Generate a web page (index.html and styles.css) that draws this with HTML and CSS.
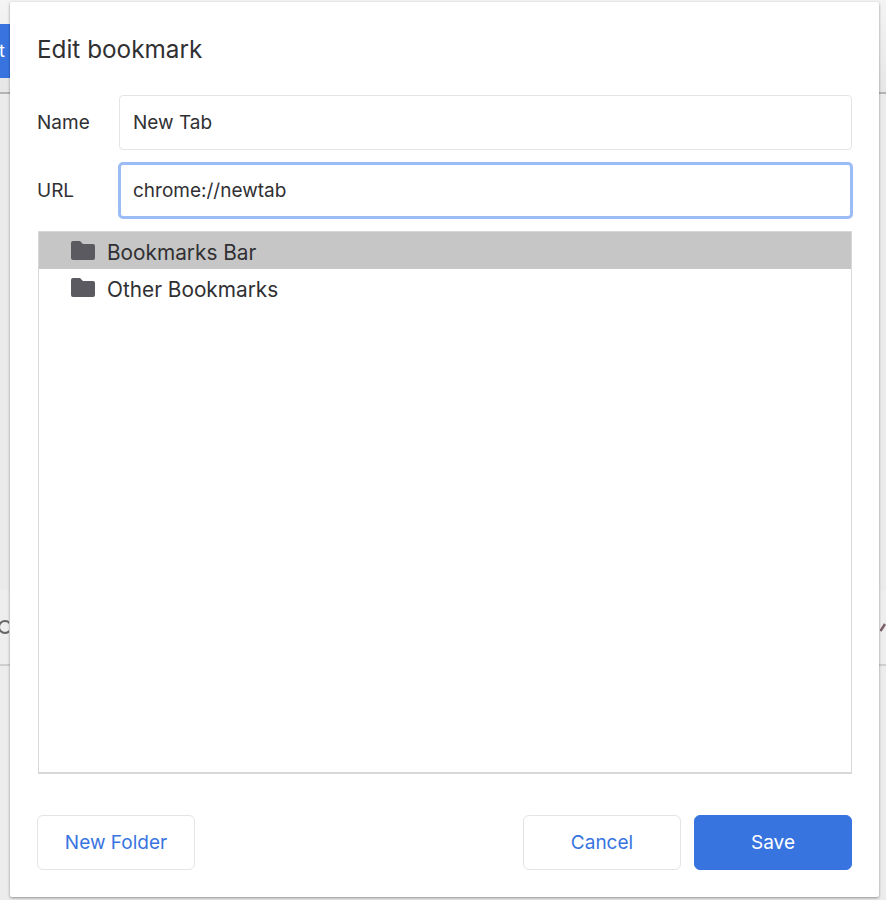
FILE: index.html
```html
<!DOCTYPE html>
<html lang="en">
<head>
  <meta charset="UTF-8" />
  <title>Edit bookmark</title>
  <link rel="stylesheet" href="styles.css">
</head>
<body>
  <!-- Page behind the dialog -->
  <div class="backdrop">
    <div class="top-strip">
      <div class="back-button">t</div>
    </div>
    <div class="gap-strip"></div>
    <div class="row-strip">
      <svg class="back-icon" width="14" height="20" viewBox="0 0 14 20"><circle cx="10" cy="10" r="6" fill="none" stroke="#666" stroke-width="2" /></svg>
      <svg class="back-pen" width="6" height="14" viewBox="0 0 6 14"><path d="M0.5 11 L5 4" fill="none" stroke="#7a5f66" stroke-width="2.4" /></svg>
    </div>
    <div class="tail-strip"></div>
  </div>

  <!-- Dialog -->
  <div class="dialog">
    <h1>Edit bookmark</h1>
    <div class="field">
      <label>Name</label>
      <input class="text-input" type="text" value="New Tab" />
    </div>
    <div class="field">
      <label>URL</label>
      <input class="text-input focused" type="text" value="chrome://newtab" />
    </div>
    <div class="tree">
      <div class="tree-row selected">
        <svg class="folder" width="24" height="19" viewBox="0 0 24 19"><path d="M2 0 H9 L12 3 H22 A2 2 0 0 1 24 5 V17 A2 2 0 0 1 22 19 H2 A2 2 0 0 1 0 17 V2 A2 2 0 0 1 2 0 Z" fill="#5a5a60" /></svg>
        <span>Bookmarks Bar</span>
      </div>
      <div class="tree-row">
        <svg class="folder" width="24" height="19" viewBox="0 0 24 19"><path d="M2 0 H9 L12 3 H22 A2 2 0 0 1 24 5 V17 A2 2 0 0 1 22 19 H2 A2 2 0 0 1 0 17 V2 A2 2 0 0 1 2 0 Z" fill="#5a5a60" /></svg>
        <span>Other Bookmarks</span>
      </div>
    </div>
    <div class="actions">
      <button class="btn">New Folder</button>
      <div class="actions-right">
        <button class="btn">Cancel</button>
        <button class="btn primary">Save</button>
      </div>
    </div>
  </div>
</body>
</html>
```

FILE: styles.css
```css
/* Reset & Body */
* { box-sizing: border-box; margin: 0; padding: 0; }
html, body { width: 100%; height: 100%; }
body { font-family: Inter, 'Liberation Sans', sans-serif; overflow: hidden; background: #ededed; color: #303033; }

/* Page behind the dialog */
.backdrop { display: flex; flex-direction: column; height: 100%; }
.top-strip {
  height: 94px;
  padding-top: 24px;
  background: linear-gradient(#f4f4f4, #e6e6e6);
  border-bottom: 2px solid #b4b4b4;
}
.back-button {
  width: 10px; height: 54px;
  overflow: hidden;
  background: #3874e0;
  color: #fff;
  font-size: 18px;
  line-height: 54px;
  text-indent: -1px;
}
.gap-strip { height: 496px; flex: none; background: #ebebeb; }
.row-strip {
  height: 76px;
  flex: none;
  display: flex;
  align-items: center;
  justify-content: space-between;
  background: #eeeeee;
  border-bottom: 2px solid #cfcfcf;
}
.back-icon { margin-left: -5px; }
.tail-strip { flex: 1; background: #ececec; }

/* Dialog */
.dialog {
  position: absolute;
  top: 2px; left: 10px;
  width: 869px; height: 895px;
  display: flex;
  flex-direction: column;
  padding: 32px 27px 27px 27px;
  background: #fff;
  border-radius: 2px;
  box-shadow: 0 1px 3px rgba(0,0,0,0.4);
}
h1 { font-size: 24.3px; font-weight: 400; line-height: 30px; margin-bottom: 31px; }

.field { display: flex; align-items: center; height: 55px; margin-bottom: 13px; }
.field label { width: 82px; font-size: 19px; }
.text-input {
  flex: 1;
  min-width: 0;
  height: 55px;
  padding: 0 13px;
  border: 1px solid #e4e4e4;
  border-radius: 4px;
  outline: none;
  font-family: inherit;
  font-size: 19px;
  color: #303033;
}
.text-input.focused {
  height: 57px;
  margin: 0 -1px;
  padding: 0 12px;
  border: 3px solid #9cbcf5;
  border-radius: 5px;
}

.tree {
  flex: 1;
  margin-left: 1px;
  border: 1px solid #d8d8d8;
  border-bottom-width: 2px;
}
.tree-row {
  height: 37px;
  display: flex;
  align-items: center;
  padding-left: 32px;
  font-size: 20.8px;
}
.tree-row span { padding-top: 3px; }
.tree-row.selected { background: #c6c6c6; }
.folder { margin-right: 12px; }

.actions { display: flex; justify-content: space-between; margin-top: 41px; }
.actions-right { display: flex; gap: 13px; }
.btn {
  width: 158px; height: 55px;
  background: #fff;
  border: 1px solid #e4e4e4;
  border-radius: 6px;
  color: #3874e0;
  font-family: inherit;
  font-size: 19px;
}
.btn.primary { background: #3874e0; border-color: #3874e0; color: #fff; }
```
